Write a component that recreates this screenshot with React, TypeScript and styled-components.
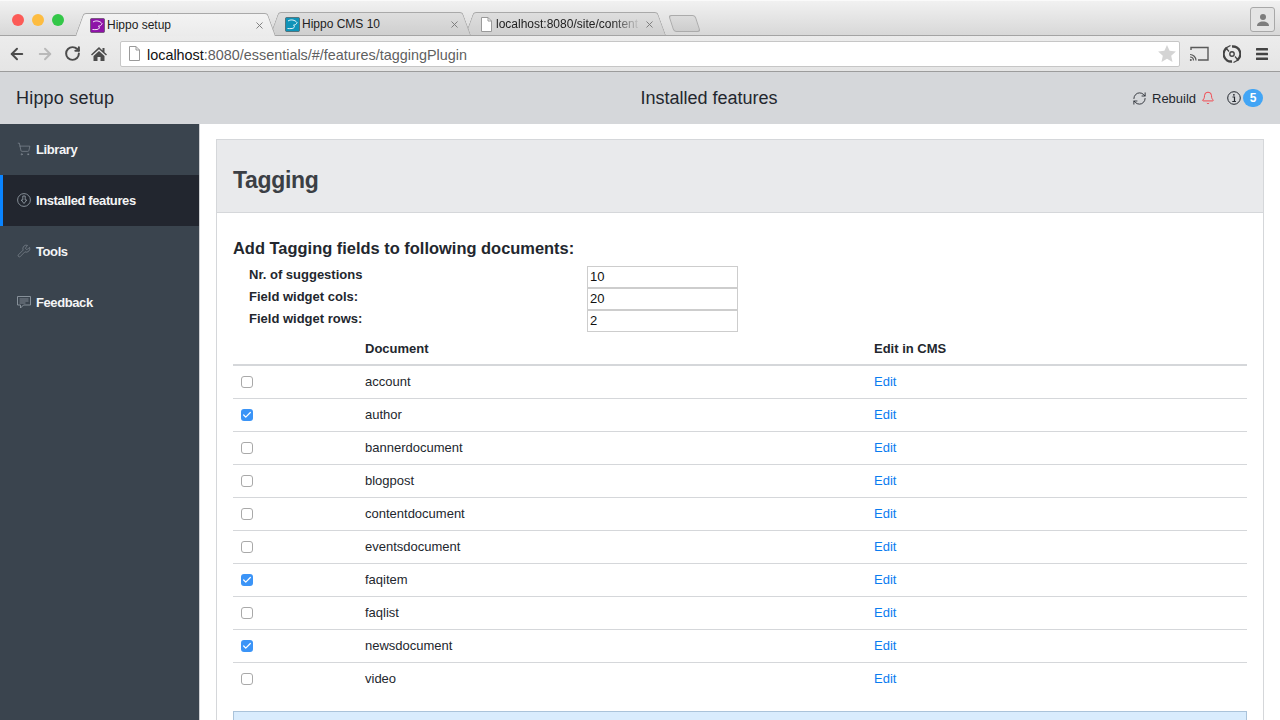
import React from 'react';
import styled, { createGlobalStyle } from 'styled-components';
import { ArrowLeft, ArrowRight, Bell, Check, RefreshCw, RotateCw, ShoppingCart, Wrench, X } from 'lucide-react';

const GlobalStyle = createGlobalStyle`
  html, body {
    margin: 0;
    height: 100%;
    overflow: hidden;
    background: #fff;
    font-family: "Liberation Sans", Arial, sans-serif;
    color: #23272e;
  }
`;

const Page = styled.div`
  display: flex;
  flex-direction: column;
  width: 1280px;
  height: 720px;
  overflow: hidden;
`;

const TabStrip = styled.div`
  display: flex;
  align-items: flex-end;
  height: 36px;
  flex: none;
  box-sizing: border-box;
  padding-left: 75px;
  position: relative;
  background: linear-gradient(#f1f1f1, #d8d8d8);
  border-top: 1px solid #fafafa;
  border-bottom: 1px solid #a4a4a4;
`;

const TrafficLights = styled.div`
  position: absolute;
  left: 12px;
  top: 13px;
  display: flex;
  gap: 8px;
`;

const Light = styled.span<{ $color: string }>`
  width: 12px;
  height: 12px;
  border-radius: 50%;
  background: ${p => p.$color};
`;

const Tab = styled.div<{ $active?: boolean; $z: number }>`
  position: relative;
  z-index: ${p => p.$z};
  width: 201px;
  height: 23px;
  margin-right: -6px;
  margin-bottom: ${p => (p.$active ? '-1px' : '0')};
  display: flex;
  align-items: center;
  box-sizing: border-box;
  padding: 0 11px 0 15px;
  font-size: 12px;
  color: #222;

  &::before,
  &::after {
    content: '';
    position: absolute;
    top: 0;
    bottom: 0;
    width: 55%;
    box-sizing: border-box;
    border-top: 1px solid #a9a9a9;
    background: ${p => (p.$active ? 'linear-gradient(#f3f3f3, #ebebeb)' : 'linear-gradient(#dedede, #cfcfcf)')};
  }

  &::before {
    left: 0;
    border-left: 1px solid #a9a9a9;
    border-top-left-radius: 3px;
    transform-origin: bottom left;
    transform: skewX(-20deg);
  }

  &::after {
    right: 0;
    border-right: 1px solid #a9a9a9;
    border-top-right-radius: 3px;
    transform-origin: bottom right;
    transform: skewX(20deg);
  }
`;

const TabInner = styled.div<{ $gap?: number }>`
  position: relative;
  z-index: 1;
  display: flex;
  align-items: center;
  width: 100%;
  padding-top: 1px;
  gap: ${p => p.$gap ?? 2}px;
`;

const TabLabel = styled.span<{ $faded?: boolean }>`
  flex: 1;
  white-space: nowrap;
  ${p => p.$faded && 'mask-image: linear-gradient(to right, #000 80%, transparent 100%);'}
`;

const NewTab = styled.div`
  width: 25px;
  height: 15px;
  margin: 0 0 3px 11px;
  border: 1px solid #ababab;
  border-radius: 3px;
  background: linear-gradient(#dcdcdc, #cdcdcd);
  transform: skewX(18deg);
`;

const ProfileButton = styled.div`
  position: absolute;
  right: 5px;
  top: 6px;
  width: 25px;
  height: 25px;
  box-sizing: border-box;
  border: 1px solid #a8a8a8;
  border-radius: 3px;
  background: #e4e4e4;
  display: flex;
  align-items: center;
  justify-content: center;
`;

const Toolbar = styled.div`
  height: 36px;
  flex: none;
  box-sizing: border-box;
  display: flex;
  align-items: center;
  padding: 0 8px;
  background: linear-gradient(#ececec, #e5e5e5);
  border-bottom: 1px solid #9c9c9c;
`;

const NavIcons = styled.div`
  display: flex;
  align-items: center;
  width: 112px;
  flex: none;
  gap: 10px;
  color: #4c4c4c;
`;

const AddressBar = styled.div`
  width: 1060px;
  height: 26px;
  flex: none;
  box-sizing: border-box;
  display: flex;
  align-items: center;
  padding: 0 3px 0 7px;
  background: #fff;
  border: 1px solid #c6c6c6;
  border-radius: 2px;
  font-size: 14.4px;
  color: #5f5f5f;
`;

const Host = styled.span`
  color: #111;
`;

const UrlText = styled.span`
  flex: 1;
  margin-left: 6px;
  padding-top: 2px;
  white-space: nowrap;
`;

const ToolIcons = styled.div`
  display: flex;
  align-items: center;
  margin-left: 9px;
  gap: 14px;
`;

const AppHeader = styled.header`
  display: grid;
  grid-template-columns: 200px 1fr 148px;
  align-items: center;
  height: 52px;
  flex: none;
  background: #d5d7da;
  font-size: 18px;
  color: #23272e;
`;

const Brand = styled.div`
  padding-left: 16px;
  letter-spacing: 0.2px;
`;

const HeaderTitle = styled.div`
  padding-left: 86px;
  text-align: center;
`;

const HeaderTools = styled.div`
  display: flex;
  align-items: center;
  font-size: 13px;
`;

const RebuildLabel = styled.span`
  margin: 0 5px;
`;

const InfoGroup = styled.div`
  display: flex;
  align-items: center;
  margin-left: 12px;
`;

const Badge = styled.span`
  width: 20px;
  height: 18px;
  border-radius: 9px;
  margin-left: 2px;
  background: #42a5f5;
  color: #fff;
  font-size: 12px;
  font-weight: bold;
  line-height: 18px;
  text-align: center;
`;

const Main = styled.div`
  display: flex;
  flex: 1;
  min-height: 0;
`;

const Sidebar = styled.nav`
  width: 200px;
  flex: none;
  box-sizing: border-box;
  background: #3a444e;
  border-right: 1px solid #cfd1d4;
`;

const NavItem = styled.div<{ $active?: boolean }>`
  height: 51px;
  box-sizing: border-box;
  display: flex;
  align-items: center;
  gap: 5px;
  padding: 0 0 1px ${p => (p.$active ? '14px' : '17px')};
  background: ${p => (p.$active ? '#22262f' : 'transparent')};
  border-left: ${p => (p.$active ? '3px solid #0a84ff' : 'none')};
  color: #f4f5f6;
  font-size: 13px;
  font-weight: bold;
  letter-spacing: -0.4px;

  svg {
    color: #8f98a1;
    flex: none;
  }
`;

const Content = styled.main`
  flex: 1;
  min-width: 0;
  padding: 15px 16px 0;
`;

const Panel = styled.section`
  border: 1px solid #d5d7da;
  border-bottom: none;
  height: 640px;
`;

const PanelHeading = styled.div`
  height: 73px;
  box-sizing: border-box;
  display: flex;
  align-items: center;
  padding: 9px 0 0 16px;
  background: #e9eaec;
  border-bottom: 1px solid #d5d7da;
`;

const PanelTitle = styled.h1`
  margin: 0;
  font-size: 23px;
  font-weight: bold;
  letter-spacing: -0.3px;
  color: #3b3f45;
`;

const PanelBody = styled.div`
  padding: 25px 16px 0;
`;

const SectionTitle = styled.h2`
  margin: 0 0 8px;
  font-size: 16.45px;
  line-height: 20px;
  font-weight: bold;
  color: #23272e;
`;

const OptionRow = styled.div`
  display: grid;
  grid-template-columns: 338px 151px;
  height: 22px;
  padding-left: 16px;
`;

const OptionLabel = styled.label`
  font-size: 13px;
  font-weight: bold;
  line-height: 17px;
`;

const OptionInput = styled.input`
  width: 151px;
  height: 22px;
  box-sizing: border-box;
  margin: 0;
  padding: 0 2px 2px;
  border: 1px solid #cdcdcd;
  border-radius: 0;
  outline: none;
  background: #fff;
  font: 13px "Liberation Sans", Arial, sans-serif;
  color: #111;
`;

const Table = styled.table`
  width: 1014px;
  border-collapse: collapse;
  table-layout: fixed;
  font-size: 13px;
`;

const HeadCell = styled.th<{ $width: number }>`
  width: ${p => p.$width}px;
  height: 33px;
  box-sizing: border-box;
  padding: 1px 8px 0;
  text-align: left;
  font-weight: bold;
  border-bottom: 2px solid #d5d7da;
`;

const Cell = styled.td`
  height: 33px;
  box-sizing: border-box;
  padding: 0 8px;
  border-bottom: 1px solid #d5d7da;

  tr:last-child > & {
    border-bottom: none;
  }
`;

const EditLink = styled.a`
  color: #0a7cf0;
  text-decoration: none;
`;

const CheckBox = styled.span<{ $checked: boolean }>`
  display: flex;
  align-items: center;
  justify-content: center;
  width: 12px;
  height: 12px;
  box-sizing: border-box;
  border-radius: 3px;
  border: ${p => (p.$checked ? 'none' : '1px solid #a9a9a9')};
  background: ${p => (p.$checked ? '#3b94f7' : '#fff')};
  color: #fff;
`;

const Notice = styled.div`
  height: 60px;
  margin-top: 16px;
  box-sizing: border-box;
  background: #d9ecfd;
  border: 1px solid #aac3da;
`;

const documents: [string, boolean][] = [
  ['account', false],
  ['author', true],
  ['bannerdocument', false],
  ['blogpost', false],
  ['contentdocument', false],
  ['eventsdocument', false],
  ['faqitem', true],
  ['faqlist', false],
  ['newsdocument', true],
  ['video', false],
];

const options = [
  ['Nr. of suggestions', '10'],
  ['Field widget cols:', '20'],
  ['Field widget rows:', '2'],
];

const HippoFavicon = ({ color }: { color: string }) => (
  <svg width="15" height="15" viewBox="0 0 15 15">
    <rect x="0.5" y="0.5" width="14" height="14" rx="1" fill={color} stroke="#333" strokeOpacity="0.5" />
    <path d="M3 4c3-2 7-1 9 1.500-.5 2-2 2.500-3.500 2.500C10 9.500 9.500 11 7 11.500c-1.500.3-3 0-4.500 0" fill="none" stroke="#fff" strokeWidth="0.9" />
  </svg>
);

const PageFavicon = () => (
  <svg width="13" height="15" viewBox="0 0 13 15">
    <path d="M1.500.5h6.500l3.500 3.500v10.500h-10z" fill="#fff" stroke="#9a9a9a" />
    <path d="M8 .5v3.500h3.500" fill="none" stroke="#9a9a9a" />
  </svg>
);

const CloseIcon = () => <X size={11} strokeWidth={2} color="#777" />;

const HomeIcon = () => (
  <svg width="16" height="16" viewBox="0 0 16 16" fill="#4c4c4c">
    <path d="M8 1L0 8.500l1 1L8 3.200l7 6.300 1-1-2.500-2.300V2h-2v2.400z" />
    <path d="M2.500 10L8 5l5.500 5v5H9.500v-4h-3v4h-4z" />
  </svg>
);

const CastIcon = () => (
  <svg width="20" height="16" viewBox="0 0 20 16" fill="none" stroke="#5a5a5a">
    <path d="M2 4V1.500h17v12.500H9" strokeWidth="1.400" />
    <path d="M1 8.500a6 6 0 0 1 6 6M1 11a3.500 3.500 0 0 1 3.500 3.500" strokeWidth="1.200" />
    <circle cx="1.800" cy="14" r="1" fill="#5a5a5a" stroke="none" />
  </svg>
);

const ExtensionIcon = () => (
  <svg width="18" height="18" viewBox="0 0 18 18" fill="none" stroke="#444">
    <path d="M4 2.800A7.500 7.500 0 0 0 9 16.500" strokeWidth="2.400" />
    <path d="M14 15.200A7.500 7.500 0 0 0 9 1.500" strokeWidth="2.400" />
    <path d="M7.500 .5L3 3l3 3.500M10.500 17.500L15 15l-3-3.500" strokeWidth="1.200" />
    <circle cx="9" cy="9" r="2.200" strokeWidth="1.400" />
  </svg>
);

const MenuIcon = () => (
  <svg width="14" height="14" viewBox="0 0 14 14" fill="#444">
    <rect x="1" y="1" width="12" height="2.500" rx="0.500" />
    <rect x="1" y="5.700" width="12" height="2.500" rx="0.500" />
    <rect x="1" y="10.500" width="12" height="2.500" rx="0.500" />
  </svg>
);

const StarIcon = () => (
  <svg width="18" height="17" viewBox="0 0 18 17" fill="#d4d4d4">
    <path d="M9 0l2.600 5.800 6.300.7-4.700 4.200 1.300 6.200L9 13.700 3.500 17l1.300-6.200L.1 6.500l6.300-.7z" />
  </svg>
);

const ProfileIcon = () => (
  <svg width="14" height="14" viewBox="0 0 14 14" fill="#7d7d7d">
    <circle cx="7" cy="4" r="3" />
    <path d="M1 13c0-3 2.500-4.500 6-4.500s6 1.500 6 4.500z" />
  </svg>
);

const InstalledIcon = () => (
  <svg width="14" height="14" viewBox="0 0 14 14" fill="none" stroke="currentColor" strokeWidth="0.900">
    <circle cx="7" cy="7" r="6.400" />
    <path d="M5.800 3h2.400v4h1.600L7 10.500 4.200 7h1.600z" />
  </svg>
);

const FeedbackIcon = () => (
  <svg width="14" height="13" viewBox="0 0 14 13" fill="none" stroke="currentColor" strokeWidth="0.900">
    <path d="M.5.500h13v8.500H6.500L3.500 12V9h-3z" />
    <path d="M2.500 3h9M2.500 5h9M2.500 7h6" strokeWidth="0.800" />
  </svg>
);

const InfoIcon = () => (
  <svg width="14" height="14" viewBox="0 0 14 14" fill="none" stroke="#23272e">
    <circle cx="7" cy="7" r="6.300" />
    <path d="M5.500 6h2v4.300M5.300 10.500h3.600" strokeWidth="1.200" />
    <circle cx="6.900" cy="3.800" r="0.900" fill="#23272e" stroke="none" />
  </svg>
);

export default function App() {
  return (
    <Page>
      <GlobalStyle />
      <TabStrip>
        <TrafficLights>
          <Light $color="#fc5b57" />
          <Light $color="#fdbc40" />
          <Light $color="#33c748" />
        </TrafficLights>
        <Tab $active $z={3}>
          <TabInner>
            <HippoFavicon color="#8e13a8" />
            <TabLabel>Hippo setup</TabLabel>
            <CloseIcon />
          </TabInner>
        </Tab>
        <Tab $z={2}>
          <TabInner>
            <HippoFavicon color="#0f93b8" />
            <TabLabel>Hippo CMS 10</TabLabel>
            <CloseIcon />
          </TabInner>
        </Tab>
        <Tab $z={1}>
          <TabInner $gap={3}>
            <PageFavicon />
            <TabLabel $faded>localhost:8080/site/content</TabLabel>
            <CloseIcon />
          </TabInner>
        </Tab>
        <NewTab />
        <ProfileButton>
          <ProfileIcon />
        </ProfileButton>
      </TabStrip>

      <Toolbar>
        <NavIcons>
          <ArrowLeft size={18} strokeWidth={2.6} />
          <ArrowRight size={18} strokeWidth={2.6} color="#b9b9b9" />
          <RotateCw size={17} strokeWidth={2.8} />
          <HomeIcon />
        </NavIcons>
        <AddressBar>
          <PageFavicon />
          <UrlText>
            <Host>localhost</Host>:8080/essentials/#/features/taggingPlugin
          </UrlText>
          <StarIcon />
        </AddressBar>
        <ToolIcons>
          <CastIcon />
          <ExtensionIcon />
          <MenuIcon />
        </ToolIcons>
      </Toolbar>

      <AppHeader>
        <Brand>Hippo setup</Brand>
        <HeaderTitle>Installed features</HeaderTitle>
        <HeaderTools>
          <RefreshCw size={15} strokeWidth={1.4} />
          <RebuildLabel>Rebuild</RebuildLabel>
          <Bell size={14} strokeWidth={1.5} color="#f5353d" />
          <InfoGroup>
            <InfoIcon />
            <Badge>5</Badge>
          </InfoGroup>
        </HeaderTools>
      </AppHeader>

      <Main>
        <Sidebar>
          <NavItem>
            <ShoppingCart size={14} strokeWidth={1} />
            Library
          </NavItem>
          <NavItem $active>
            <InstalledIcon />
            Installed features
          </NavItem>
          <NavItem>
            <Wrench size={14} strokeWidth={1} />
            Tools
          </NavItem>
          <NavItem>
            <FeedbackIcon />
            Feedback
          </NavItem>
        </Sidebar>

        <Content>
          <Panel>
            <PanelHeading>
              <PanelTitle>Tagging</PanelTitle>
            </PanelHeading>
            <PanelBody>
              <SectionTitle>Add Tagging fields to following documents:</SectionTitle>
              {options.map(([label, value]) => (
                <OptionRow key={label}>
                  <OptionLabel>{label}</OptionLabel>
                  <OptionInput defaultValue={value} />
                </OptionRow>
              ))}
              <Table>
                <thead>
                  <tr>
                    <HeadCell $width={124} />
                    <HeadCell $width={509}>Document</HeadCell>
                    <HeadCell $width={381}>Edit in CMS</HeadCell>
                  </tr>
                </thead>
                <tbody>
                  {documents.map(([name, checked]) => (
                    <tr key={name}>
                      <Cell>
                        <CheckBox $checked={checked}>
                          {checked && <Check size={10} strokeWidth={3} />}
                        </CheckBox>
                      </Cell>
                      <Cell>{name}</Cell>
                      <Cell>
                        <EditLink href="#">Edit</EditLink>
                      </Cell>
                    </tr>
                  ))}
                </tbody>
              </Table>
              <Notice />
            </PanelBody>
          </Panel>
        </Content>
      </Main>
    </Page>
  );
}
